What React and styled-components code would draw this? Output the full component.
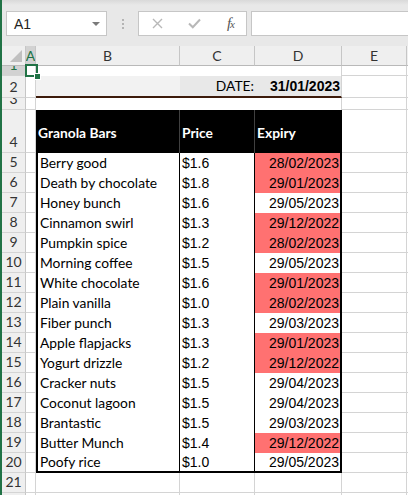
import React from 'react'
import styled, { createGlobalStyle, css } from 'styled-components'

const GlobalStyle = createGlobalStyle`
  html, body {
    margin: 0;
    padding: 0;
    background: #ffffff;
  }
  body {
    font-family: Lato, "Liberation Sans", sans-serif;
  }
`

const GRID = '#d4d4d4'
const HEAD_LINE = '#c6c6c6'
const GREEN = '#217346'
const RED = '#ff7171'

const Window = styled.div`
  width: 408px;
  height: 495px;
  overflow: hidden;
  border-left: 2px solid ${GREEN};
  box-sizing: border-box;
  background: #fff;
`

const Toolbar = styled.div`
  height: 46px;
  box-sizing: border-box;
  display: flex;
  align-items: flex-start;
  padding: 11px 0 0 4px;
  background: linear-gradient(#d9d9d9, #e8e8e8 5px, #e8e8e8);
`

const Box = styled.div`
  height: 25px;
  box-sizing: border-box;
  background: #fff;
  border: 1px solid #c6c6c6;
  display: flex;
  align-items: center;
  flex-shrink: 0;
`

const NameBox = styled(Box)`
  width: 101px;
  padding: 0 6px 0 7px;
  justify-content: space-between;
  font-family: "Liberation Sans", sans-serif;
  font-size: 14px;
  color: #222;
`

const Caret = styled.span`
  width: 0;
  height: 0;
  border-left: 4px solid transparent;
  border-right: 4px solid transparent;
  border-top: 4px solid #7a7a7a;
`

const Grip = styled.div`
  width: 31px;
  height: 25px;
  display: flex;
  flex-direction: column;
  align-items: center;
  justify-content: center;
  gap: 2px;
  flex-shrink: 0;
  span {
    width: 2px;
    height: 2px;
    background: #b4b4b4;
  }
`

const FuncBox = styled(Box)`
  width: 109px;
  padding: 0 12px 0 13px;
  justify-content: space-between;
  margin-right: 4px;
`

const Fx = styled.span`
  font-family: "Liberation Serif", serif;
  font-style: italic;
  font-size: 15px;
  color: #555;
  letter-spacing: -1px;
  small {
    font-size: 11px;
  }
`

const FormulaInput = styled(Box)`
  flex: 1;
  min-width: 200px;
`

const Sheet = styled.div`
  position: relative;
  display: grid;
  grid-template-columns: 24px 10px 144px 75px 87px 65px 1fr;
  grid-template-rows: 20px 10px 22px 12px 43px repeat(18, 20px);
  font-size: 13.8px;
  color: #000;
`

const ColHead = styled.div`
  box-sizing: border-box;
  background: ${p => (p.$active ? '#d2d2d2' : '#efefef')};
  color: ${p => (p.$active ? GREEN : '#333')};
  border-right: 1px solid ${HEAD_LINE};
  border-bottom: ${p => (p.$active ? `2px solid ${GREEN}` : `1px solid #b9b9b9`)};
  display: flex;
  align-items: center;
  justify-content: center;
  overflow: hidden;
  font-size: 14px;
`

const Corner = styled(ColHead)`
  position: relative;
  &::after {
    content: '';
    position: absolute;
    right: 3px;
    bottom: 3px;
    border-left: 12px solid transparent;
    border-bottom: 12px solid #c0c0c0;
  }
`

const RowHead = styled.div`
  box-sizing: border-box;
  background: ${p => (p.$active ? '#d2d2d2' : '#efefef')};
  color: ${p => (p.$active ? GREEN : '#333')};
  border-right: 1px solid ${HEAD_LINE};
  border-bottom: 1px solid ${GRID};
  display: flex;
  align-items: flex-end;
  justify-content: center;
  padding-bottom: 3px;
  overflow: hidden;
  line-height: 14px;
  font-size: 14px;
`

const line = (v) => {
  if (v === 'grid') return `1px solid ${GRID}`
  if (v === 'thin') return '1px solid #000'
  if (v === 'thick') return '2px solid #000'
  if (v === 'dim') return '1px solid #404040'
  if (v === 'brown') return '2px solid #3d1b0b'
  return 'none'
}

const Cell = styled.div`
  box-sizing: border-box;
  background: ${p => p.$bg || '#fff'};
  border-right: ${p => line(p.$r === undefined ? 'grid' : p.$r)};
  border-bottom: ${p => line(p.$b === undefined ? 'grid' : p.$b)};
  border-left: ${p => line(p.$l)};
  display: flex;
  align-items: center;
  justify-content: ${p => (p.$right ? 'flex-end' : 'flex-start')};
  padding: 0 ${p => (p.$right ? '1px' : '2px')} 0 2px;
  font-weight: ${p => (p.$bold ? 700 : 400)};
  color: ${p => p.$color || '#000'};
  white-space: nowrap;
  overflow: hidden;
  line-height: 18px;
  ${p =>
    p.$num &&
    css`
      font-family: "Liberation Sans", sans-serif;
      font-size: 14px;
    `}
  ${p =>
    p.$bottomText &&
    css`
      align-items: flex-end;
      padding-bottom: 11px;
    `}
`

const Selection = styled.div`
  position: absolute;
  left: 23px;
  top: 18px;
  width: 13px;
  height: 13px;
  box-sizing: border-box;
  border: 2px solid ${GREEN};
  &::after {
    content: '';
    position: absolute;
    right: -5px;
    bottom: -5px;
    width: 5px;
    height: 5px;
    background: ${GREEN};
    border: 1px solid #fff;
  }
`

const rows = [
  ['Berry good', '$1.6', '28/02/2023', true],
  ['Death by chocolate', '$1.8', '29/01/2023', true],
  ['Honey bunch', '$1.6', '29/05/2023', false],
  ['Cinnamon swirl', '$1.3', '29/12/2022', true],
  ['Pumpkin spice', '$1.2', '28/02/2023', true],
  ['Morning coffee', '$1.5', '29/05/2023', false],
  ['White chocolate', '$1.6', '29/01/2023', true],
  ['Plain vanilla', '$1.0', '28/02/2023', true],
  ['Fiber punch', '$1.3', '29/03/2023', false],
  ['Apple flapjacks', '$1.3', '29/01/2023', true],
  ['Yogurt drizzle', '$1.2', '29/12/2022', true],
  ['Cracker nuts', '$1.5', '29/04/2023', false],
  ['Coconut lagoon', '$1.5', '29/04/2023', false],
  ['Brantastic', '$1.5', '29/03/2023', false],
  ['Butter Munch', '$1.4', '29/12/2022', true],
  ['Poofy rice', '$1.0', '29/05/2023', false],
]

const Cross = () => (
  <svg width="11" height="11" viewBox="0 0 11 11">
    <path d="M1 1L10 10M10 1L1 10" stroke="#b8b8b8" strokeWidth="1.4" fill="none" />
  </svg>
)

const Check = () => (
  <svg width="13" height="11" viewBox="0 0 13 11">
    <path d="M1 5.5L4.8 9.3L12 1.5" stroke="#b8b8b8" strokeWidth="2" fill="none" />
  </svg>
)

const EmptyRow = ({ n, tail, active }) => (
  <>
    <RowHead $active={active}>{n}</RowHead>
    <Cell />
    {tail}
    <Cell />
    <Cell />
  </>
)

export default function App() {
  return (
    <>
      <GlobalStyle />
      <Window>
        <Toolbar>
          <NameBox>
            A1
            <Caret />
          </NameBox>
          <Grip>
            <span />
            <span />
            <span />
          </Grip>
          <FuncBox>
            <Cross />
            <Check />
            <Fx>
              f<small>x</small>
            </Fx>
          </FuncBox>
          <FormulaInput />
        </Toolbar>

        <Sheet>
          <Corner />
          <ColHead $active>A</ColHead>
          <ColHead>B</ColHead>
          <ColHead>C</ColHead>
          <ColHead>D</ColHead>
          <ColHead>E</ColHead>
          <ColHead />

          <EmptyRow
            n={1}
            active
            tail={
              <>
                <Cell $r="none" $b="none" />
                <Cell $r="none" $b="none" />
                <Cell $b="none" />
              </>
            }
          />

          <EmptyRow
            n={2}
            tail={
              <>
                <Cell $bg="#f2f2f2" $r="none" $b="brown" />
                <Cell $bg="#e8e8e8" $r="none" $b="brown" $right>
                  DATE:
                </Cell>
                <Cell $bg="#e8e8e8" $b="brown" $right $bold $num>
                  31/01/2023
                </Cell>
              </>
            }
          />

          <EmptyRow
            n={3}
            tail={
              <>
                <Cell $r="none" $b="none" />
                <Cell $r="none" $b="none" />
                <Cell $b="none" />
              </>
            }
          />

          <EmptyRow
            n={4}
            tail={
              <>
                <Cell $bg="#000" $r="dim" $b="none" $bold $color="#fff" $bottomText>
                  Granola Bars
                </Cell>
                <Cell $bg="#000" $r="dim" $b="none" $bold $color="#fff" $bottomText>
                  Price
                </Cell>
                <Cell $bg="#000" $r="thick" $b="none" $bold $color="#fff" $bottomText>
                  Expiry
                </Cell>
              </>
            }
          />

          {rows.map(([name, price, date, expired], i) => {
            const last = i === rows.length - 1
            const b = last ? 'thick' : 'none'
            return (
              <EmptyRow
                key={name}
                n={i + 5}
                tail={
                  <>
                    <Cell $l="thick" $r="thin" $b={b}>
                      {name}
                    </Cell>
                    <Cell $r="thin" $b={b} $num>
                      {price}
                    </Cell>
                    <Cell $r="thick" $b={b} $bg={expired ? RED : '#fff'} $right $num>
                      {date}
                    </Cell>
                  </>
                }
              />
            )
          })}

          <EmptyRow
            n={21}
            tail={
              <>
                <Cell />
                <Cell />
                <Cell />
              </>
            }
          />
          <EmptyRow
            n={22}
            tail={
              <>
                <Cell />
                <Cell />
                <Cell />
              </>
            }
          />

          <Selection />
        </Sheet>
      </Window>
    </>
  )
}
